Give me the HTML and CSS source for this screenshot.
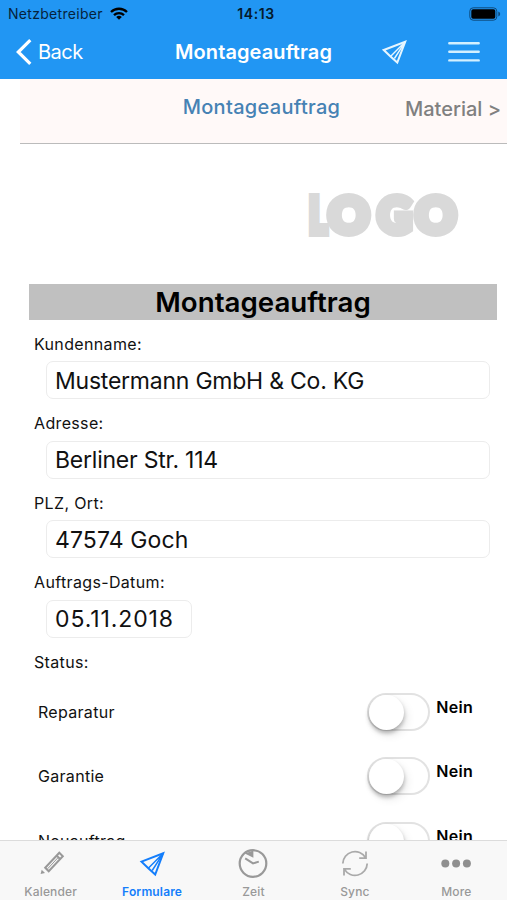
FILE: index.html
```html
<!DOCTYPE html>
<html lang="de">
<head>
  <meta charset="UTF-8">
  <meta name="viewport" content="width=device-width, initial-scale=1.0">
  <title>Montageauftrag</title>
  <link rel="stylesheet" href="styles.css">
</head>
<body>
  <header class="header">
    <div class="status-bar">
      <div class="carrier">
        <span>Netzbetreiber</span>
        <svg width="18" height="13" viewBox="0 0 18 13" fill="none" stroke="#000" stroke-width="2.3">
          <path d="M1 5 A11.5 11.5 0 0 1 17 5"/>
          <path d="M4 8.2 A7.2 7.2 0 0 1 14 8.2"/>
          <path d="M9 12.8 L6.2 10 A4 4 0 0 1 11.8 10 Z" fill="#000" stroke="none"/>
        </svg>
      </div>
      <span class="clock">14:13</span>
      <svg class="battery" width="32" height="14" viewBox="0 0 32 14">
        <rect x="0.8" y="0.8" width="27" height="12.4" rx="3.4" fill="none" stroke="#0e4a7c" stroke-width="1"/>
        <rect x="2.3" y="2.3" width="24" height="9.4" rx="1.8" fill="#000"/>
        <path d="M29.3 4.6 Q31.2 5.4 31.2 7 Q31.2 8.6 29.3 9.4 Z" fill="#0e4a7c"/>
      </svg>
    </div>
    <nav class="nav-bar">
      <a class="back">
        <svg width="16" height="26" viewBox="0 0 16 26" fill="none" stroke="#fff" stroke-width="3.2">
          <path d="M14.3 1.2 L2.3 13 L14.3 24.8"/>
        </svg>
        <span>Back</span>
      </a>
      <h1 class="nav-title">Montageauftrag</h1>
      <div class="nav-actions">
        <svg width="25" height="25" viewBox="0 0 25 25" fill="none" stroke="#e6f6ff" stroke-width="2">
          <path d="M1.8 10 L23.2 1.8 L15.3 22.6 L8.5 16.5 Z"/>
          <path d="M8.5 16.5 L23.2 1.8 L12.4 18.5" stroke-width="1.4"/>
        </svg>
        <svg width="32" height="22" viewBox="0 0 32 22" stroke="#d3f0ff" stroke-width="2.4" stroke-linecap="round">
          <path d="M1.3 2.2 H30.7 M1.3 10.8 H30.7 M1.3 19.4 H30.7"/>
        </svg>
      </div>
    </nav>
  </header>

  <main class="content">
    <div class="pager">
      <span class="current">Montageauftrag</span>
      <span class="next">Material &gt;</span>
    </div>
    <div class="logo">
      <svg width="156" height="50" viewBox="0 0 156 50">
        <text y="43.5"><tspan x="4" textLength="18" lengthAdjust="spacingAndGlyphs">L</tspan><tspan x="23.5">O</tspan><tspan x="72.5" textLength="34" lengthAdjust="spacingAndGlyphs">G</tspan><tspan x="110.5">O</tspan></text>
      </svg>
    </div>
    <h2 class="form-title">Montageauftrag</h2>

    <!-- Auftragsdaten -->
    <form class="form">
      <label for="kunde">Kundenname:</label>
      <input type="text" id="kunde" value="Mustermann GmbH &amp; Co. KG">
      <label for="adresse">Adresse:</label>
      <input type="text" id="adresse" value="Berliner Str. 114">
      <label for="ort">PLZ, Ort:</label>
      <input type="text" id="ort" class="zip" value="47574 Goch">
      <label for="datum">Auftrags-Datum:</label>
      <input type="text" id="datum" class="date" value="05.11.2018">
      <label>Status:</label>
    </form>

    <!-- Status -->
    <div class="switch-row">
      <span class="name">Reparatur</span>
      <span class="switch"></span>
      <span class="value">Nein</span>
    </div>
    <div class="switch-row">
      <span class="name">Garantie</span>
      <span class="switch"></span>
      <span class="value">Nein</span>
    </div>
    <div class="switch-row">
      <span class="name">Neuauftrag</span>
      <span class="switch"></span>
      <span class="value">Nein</span>
    </div>
  </main>

  <footer class="tab-bar">
    <a class="tab">
      <svg width="32" height="32" viewBox="0 0 32 32" fill="none" stroke="#999" stroke-width="2">
        <path d="M10.2 20.8 L24.3 5.8 L27.8 9.2 L13.7 24.2 Z M21.5 8.6 L25.1 12"/>
        <path d="M12.6 21.8 L22.7 11" stroke-width="1"/>
        <path d="M6.7 22.8 L10 26 L5.6 27 Z" fill="#999" stroke="none"/>
      </svg>
      <span>Kalender</span>
    </a>
    <a class="tab active">
      <svg width="32" height="32" viewBox="0 0 32 32" fill="none" stroke="#147efb" stroke-width="2">
        <path d="M5.5 14.6 L27.2 6.3 L19.2 27.5 L12.3 21.2 Z"/>
        <path d="M12.3 21.2 L27.2 6.3 L16.2 23.5" stroke-width="1.5"/>
      </svg>
      <span>Formulare</span>
    </a>
    <a class="tab">
      <svg width="32" height="32" viewBox="0 0 32 32" fill="none" stroke="#999" stroke-width="2.2">
        <circle cx="16" cy="16.5" r="13.3"/>
        <path d="M7.8 6.6 L16.4 3.4 V10.8 Z" fill="#999" stroke="none"/>
        <path d="M8.2 11.4 L16 16.4 L21.8 14.6" stroke-width="2"/>
      </svg>
      <span>Zeit</span>
    </a>
    <a class="tab">
      <svg width="32" height="32" viewBox="0 0 32 32" fill="none" stroke="#aaa" stroke-width="1.8">
        <path d="M3.8 16.5 A12.2 12.2 0 0 1 26.5 10.6 M27 4.5 V11.2 H20.2"/>
        <path d="M28.2 16.5 A12.2 12.2 0 0 1 5.5 22.4 M5 28.5 V21.8 H11.8"/>
      </svg>
      <span>Sync</span>
    </a>
    <a class="tab">
      <svg width="32" height="32" viewBox="0 0 32 32" fill="#8f8f8f">
        <circle cx="5.3" cy="16.5" r="4"/>
        <circle cx="16.1" cy="16.5" r="4"/>
        <circle cx="26.9" cy="16.5" r="4"/>
      </svg>
      <span>More</span>
    </a>
  </footer>
</body>
</html>
```
FILE: styles.css
```css
* {
  box-sizing: border-box;
}
body {
  margin: 0;
  height: 900px;
  display: flex;
  flex-direction: column;
  overflow: hidden;
  background: #fff;
  color: #111;
  font-family: Inter, "Liberation Sans", sans-serif;
}
svg {
  display: block;
}
h1, h2 {
  margin: 0;
  font-weight: 600;
}
.header {
  flex: none;
  height: 79px;
  background: #2196f3;
}
.status-bar {
  height: 27px;
  padding: 0 6px 0 8px;
  display: grid;
  grid-template-columns: 1fr auto 1fr;
  align-items: center;
  color: #06233c;
  font-size: 14px;
}
.carrier {
  display: flex;
  align-items: center;
  gap: 7px;
  letter-spacing: 0.3px;
}
.clock {
  padding-left: 3px;
  color: #041a2d;
  font-weight: 600;
  letter-spacing: 0.6px;
}
.battery {
  justify-self: end;
}
.nav-bar {
  height: 50px;
  padding: 0 16px;
  display: grid;
  grid-template-columns: 1fr auto 1fr;
  align-items: center;
  color: #fff;
}
.back {
  display: flex;
  align-items: center;
  gap: 6px;
  font-size: 20px;
  letter-spacing: -0.5px;
}
.nav-title {
  font-size: 20px;
  letter-spacing: 0.1px;
}
.nav-actions {
  padding-right: 11px;
  display: flex;
  justify-content: flex-end;
  align-items: center;
  gap: 41px;
}
.content {
  flex: 1;
  min-height: 0;
  padding-left: 20px;
  overflow: hidden;
}
.pager {
  height: 65px;
  padding: 0 6px 9px 2px;
  display: grid;
  grid-template-columns: 1fr auto 1fr;
  align-items: center;
  background: #fff9f8;
  border-bottom: 1px solid #bbb;
  font-size: 20px;
  font-weight: 500;
}
.current {
  grid-column: 2;
  color: #4682b4;
  letter-spacing: 0.3px;
}
.next {
  padding-top: 5px;
  text-align: right;
  color: #808080;
}
.logo {
  height: 140px;
  padding: 45px 46px 0 0;
  display: flex;
  justify-content: flex-end;
}
.logo text {
  font-family: Lato, sans-serif;
  font-size: 50px;
  font-weight: 900;
  fill: #d9d9d9;
  stroke: #d9d9d9;
  stroke-width: 8px;
}
.form-title {
  height: 36px;
  margin: 0 10px 0 9px;
  background: #c0c0c0;
  color: #000;
  font-size: 27.7px;
  line-height: 37px;
  text-align: center;
}
.form {
  padding: 14px 17px 0 14px;
  display: flex;
  flex-direction: column;
}
.form label {
  height: 20px;
  line-height: 20px;
  font-size: 16px;
  letter-spacing: 0.35px;
}
.form input {
  height: 38px;
  margin: 7.4px 0 14px 12px;
  padding: 1px 8px 0;
  border: 1px solid #ececec;
  border-radius: 7px;
  background: #fff;
  color: #111;
  font-family: inherit;
  font-size: 23px;
  letter-spacing: -0.23px;
}
.form .zip {
  letter-spacing: 0.1px;
}
.form .date {
  width: 146px;
  letter-spacing: 0.9px;
}
.switch-row {
  height: 64.6px;
  padding: 16px 34px 0 18px;
  display: flex;
  align-items: center;
}
.name {
  flex: 1;
  font-size: 16px;
  letter-spacing: 0.3px;
}
.switch {
  width: 63px;
  height: 38px;
  border: 2px solid #e2e2e2;
  border-radius: 19px;
}
.switch::before {
  content: "";
  display: block;
  width: 35px;
  height: 35px;
  border-radius: 50%;
  background: #fff;
  box-shadow: 0 3px 4px rgba(0, 0, 0, 0.28), 3px 5px 10px rgba(0, 0, 0, 0.09);
}
.value {
  margin: -10px 0 0 6px;
  color: #000;
  font-size: 16px;
  font-weight: 600;
  letter-spacing: 0.3px;
}
.tab-bar {
  flex: none;
  height: 60px;
  display: grid;
  grid-template-columns: repeat(5, 1fr);
  background: #f8f8f8;
  border-top: 1px solid #dcdcdc;
}
.tab {
  padding-top: 6px;
  display: flex;
  flex-direction: column;
  align-items: center;
  gap: 5px;
  color: #999;
  font-size: 12px;
  font-weight: 500;
  line-height: 16px;
  letter-spacing: 0.15px;
}
.active {
  color: #147efb;
  font-weight: 600;
}
```
